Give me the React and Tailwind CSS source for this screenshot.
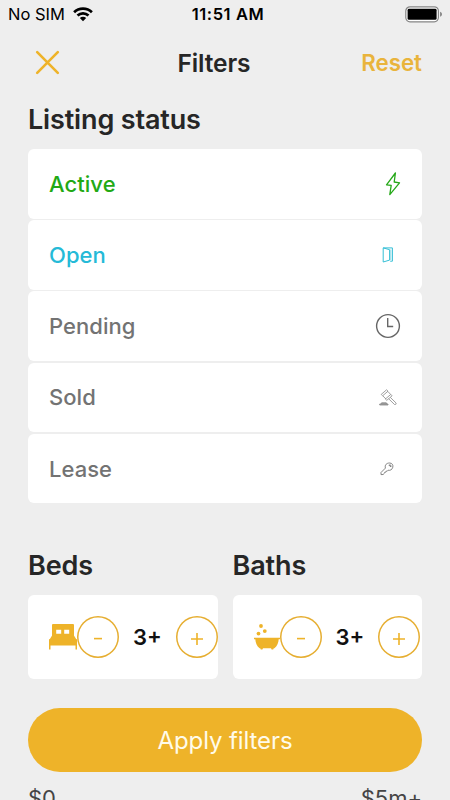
const AMBER = '#eeb329';

function StatusBar() {
  return (
    <div className="grid h-[29px] grid-cols-3 items-center pr-[7px] pl-[8px] text-black">
      <div className="-mt-px flex items-center gap-[8px]">
        <span className="pt-px text-[16.5px] leading-[29px] whitespace-nowrap">No SIM</span>
        <svg width="20" height="15" viewBox="0 0 20 15" fill="none" stroke="#000" strokeWidth="2.7">
          <path d="M1.1 5.2C6 .5 14 .5 18.9 5.2" />
          <path d="M4.5 8.6C7.6 5.7 12.4 5.7 15.5 8.6" />
          <path d="M10 14.3 6.8 11.1C8.6 9.4 11.4 9.4 13.2 11.1Z" fill="#000" stroke="none" />
        </svg>
      </div>
      <span className="pl-[5px] text-center text-[16.5px] font-semibold tracking-[0.6px] whitespace-nowrap">11:51 AM</span>
      <svg className="-mt-px justify-self-end" width="38" height="17" viewBox="0 0 38 17">
        <rect x=".8" y=".8" width="32.6" height="15" rx="4.2" fill="#fff" stroke="#858585" strokeWidth="1.2" />
        <rect x="2.6" y="2.8" width="29" height="11" rx="1.4" fill="#000" />
        <path d="M35.2 5.8c2.2.8 2.2 4.2 0 5Z" fill="#777" />
      </svg>
    </div>
  );
}

function BoltIcon() {
  return (
    <svg width="16" height="24" viewBox="0 0 16 24" fill="none" stroke="#25a818" strokeWidth="1.3" strokeLinejoin="round">
      <path d="M10.4 1 1.5 12.8 6.2 13.4 4.8 22.7 14.5 10.8 9.2 10Z" />
    </svg>
  );
}

function DoorIcon() {
  return (
    <svg width="12" height="16" viewBox="0 0 12 16" fill="none" stroke="#35bfd6" strokeWidth="1" strokeLinejoin="round">
      <path d="M1.2.9H10.4V14.2H8.2M1.2.9 7.6 2.7V13.1L1.2 15Z" />
      <path d="M8.8 2.5V13" strokeOpacity=".5" />
    </svg>
  );
}

function ClockIcon() {
  return (
    <svg width="26" height="26" viewBox="0 0 26 26" fill="none" stroke="#666" strokeWidth="1.4">
      <circle cx="13" cy="13" r="11.4" />
      <path d="M12.7 5V13.5H18.2" />
    </svg>
  );
}

function GavelIcon() {
  return (
    <svg width="18" height="17" viewBox="0 0 18 17" fill="none" stroke="#888" strokeWidth=".8" strokeLinejoin="round">
      <path d="M2.2 5.4 7.6.8 9 2.2 3.6 6.8ZM6.4 10 11.8 5.4 13.1 6.8 7.8 11.3ZM3.9 6.9 6.9 10M8.8 2.4 11.6 5.4M9.7 9.8 15.5 15.5Q17.3 15.8 17.2 14.1L11.3 8.4" />
      <path d="M.7 16V15H9V16ZM2 15 2.6 13.8H7.3L7.9 15" fill="#aaa" />
    </svg>
  );
}

function KeyIcon() {
  return (
    <svg width="14" height="14" viewBox="0 0 14 14" fill="none" stroke="#777" strokeWidth=".9" strokeLinejoin="round">
      <path d="M5.4 6.1C4.5 2.7 6.9 1 9.5 1C12.2 1 13.3 3 12.8 5.2C12.3 7.7 9.9 8.8 8.1 8.2L7.2 9.2 6.2 9.1 5.8 10.2 4.7 10.3 4.3 11.4 3.1 12.5 1 12.6 1 10.5Z" />
      <path d="M8.9 3Q11.3 2.2 11.1 4.7Q9.8 4.6 8.9 3Z" />
    </svg>
  );
}

const statuses = [
  { label: 'Active', color: 'text-[#22a914]', pad: 'pr-[21.5px]', Icon: BoltIcon },
  { label: 'Open', color: 'text-[#25bad7]', pad: 'pr-[28px]', Icon: DoorIcon },
  { label: 'Pending', color: 'text-[#737373]', pad: 'pr-[21px]', Icon: ClockIcon },
  { label: 'Sold', color: 'text-[#737373]', pad: 'pr-[25px]', Icon: GavelIcon },
  { label: 'Lease', color: 'text-[#737373]', pad: 'pr-[28px]', Icon: KeyIcon },
];

function BedIcon() {
  return (
    <svg className="shrink-0" width="28" height="26" viewBox="0 0 28 26" fill={AMBER}>
      <path fillRule="evenodd" d="M4 0H24Q25 0 25 1V12H3V1Q3 0 4 0ZM7.2 5.8H12.2V9.8H7.2ZM15.2 5.8H20.2V9.8H15.2Z" />
      <path d="M3.2 11.3H24.8L27.4 15.4H.6Z" />
      <path d="M0 15.8Q0 15 .8 15H27.2Q28 15 28 15.8V25.6H26.5V21.4H1.5V25.6H0Z" />
    </svg>
  );
}

function BathIcon() {
  return (
    <svg className="shrink-0" width="26" height="26" viewBox="0 0 26 26" fill={AMBER}>
      <circle cx="7" cy="2" r="1.9" />
      <circle cx="10.8" cy="7.1" r="1.9" />
      <circle cx="4.5" cy="9.6" r="1.9" />
      <path d="M0 13.8H26V15.3H24.7C24.5 18.8 23.2 22.4 20.4 24.2H19.8L19.2 25.4H17.6L17 24.2H9L8.4 25.4H6.8L6.2 24.2H5.6C2.8 22.4 1.5 18.8 1.3 15.3H0Z" />
    </svg>
  );
}

function RoundButton({ plus }) {
  return (
    <button className="flex size-[42px] shrink-0 items-center justify-center rounded-full shadow-[inset_0_0_0_1.5px_#e6ae31]" aria-label={plus ? 'Increase' : 'Decrease'}>
      <svg width="14" height="14" viewBox="0 0 14 14" className="mt-[4px]" stroke={AMBER} strokeWidth="1.6">
        <path d={plus ? 'M1 7H13M7 1V13' : 'M3 6.6H11'} />
      </svg>
    </button>
  );
}

function Counter({ title, children }) {
  return (
    <section className="w-[189.5px]">
      <h2 className="h-[60px] pt-[12px] text-[27px] leading-[38px] font-semibold tracking-[-0.1px]">{title}</h2>
      <div className="flex h-[84px] items-center rounded-[6px] bg-white pl-[21px]">
        {children}
        <RoundButton />
        <span className="w-[56.6px] shrink-0 pt-px text-center text-[22px] font-semibold text-[#111]">3+</span>
        <RoundButton plus />
      </div>
    </section>
  );
}

export default function App() {
  return (
    <div className="h-[800px] w-[450px] overflow-hidden bg-[#eeeeee] text-[#262626]" style={{ fontFamily: 'Inter, "Liberation Sans", sans-serif' }}>
      <StatusBar />
      <header className="grid h-[68px] grid-cols-3 items-center px-[28px]">
        <svg className="ml-[7px]" width="26" height="26" viewBox="0 0 26 26" stroke={AMBER} strokeWidth="2.6" strokeLinecap="round">
          <path d="M2.2 2.2 22.8 22.8M22.8 2.2 2.2 22.8" />
        </svg>
        <h1 className="-ml-[22px] pt-px text-center text-[24.5px] font-semibold tracking-[-0.1px]">Filters</h1>
        <button className="text-right text-[22.3px] font-semibold text-[#e9b43c]">Reset</button>
      </header>
      <main className="px-[28px]">
        <h2 className="h-[52px] pt-[4px] text-[27px] leading-[38px] font-semibold tracking-[-0.15px]">Listing status</h2>
        <div className="flex flex-col gap-[1.6px]">
          {statuses.map(({ label, color, pad, Icon }) => (
            <div key={label} className={`flex h-[69.6px] items-center justify-between rounded-[6px] bg-white pl-[21px] ${pad}`}>
              <span className={`pt-px text-[22px] font-medium tracking-[0.05px] ${color}`}>{label}</span>
              <Icon />
            </div>
          ))}
        </div>
        <div className="mt-[31.6px] flex justify-between">
          <Counter title="Beds"><BedIcon /></Counter>
          <Counter title="Baths"><BathIcon /></Counter>
        </div>
        <button className="mt-[29px] h-[64px] w-full rounded-full bg-[#eeb329] pt-[3px] text-[24px] tracking-[-0.1px] text-[#fffbea]">Apply filters</button>
        <div className="mt-[11px] flex justify-between text-[22px] leading-[30px] text-[#444]">
          <span>$0</span>
          <span>$5m+</span>
        </div>
      </main>
    </div>
  );
}
